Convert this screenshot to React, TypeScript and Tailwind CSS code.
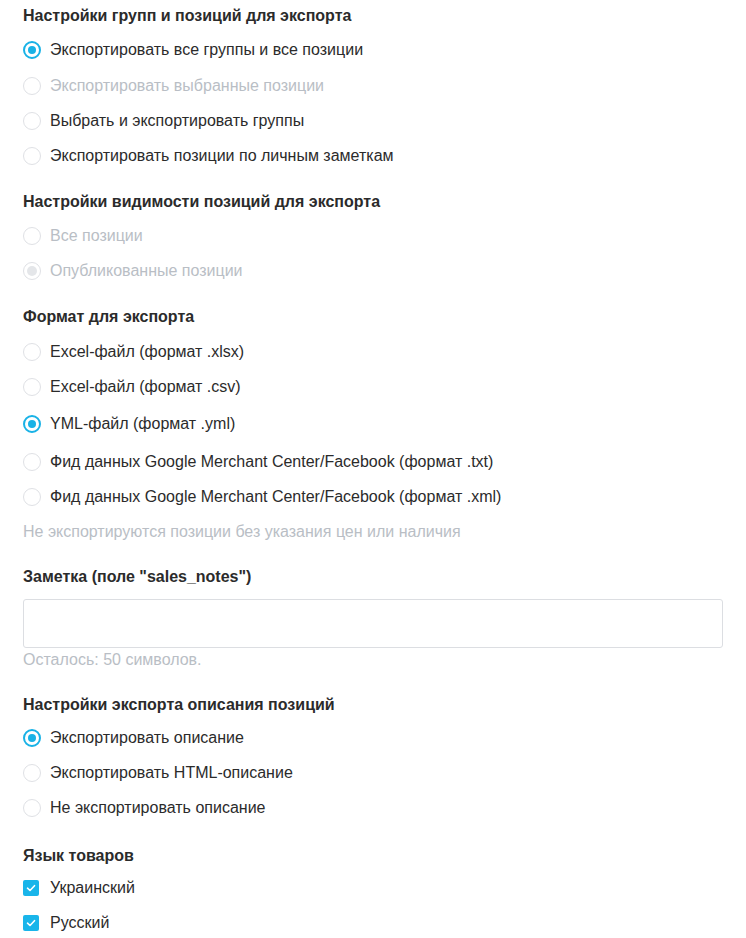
const FONT = "font-['Liberation_Sans',Arial,sans-serif]";

interface RadioRowProps {
  label: string;
  checked?: boolean;
  disabled?: boolean;
  className?: string;
}

function RadioRow({ label, checked = false, disabled = false, className = '' }: RadioRowProps) {
  return (
    <div className={`flex items-center h-[35px] ${className}`}>
      <span
        className={`size-[18px] shrink-0 rounded-full border flex items-center justify-center ${
          checked && !disabled
            ? 'border-2 border-[#19b2e6]'
            : 'border-[#dfe1e5] bg-white'
        }`}
      >
        {checked && !disabled && <span className="size-[8px] rounded-full bg-[#19b2e6]" />}
        {checked && disabled && <span className="size-[10px] rounded-full bg-[#e4e6e9]" />}
      </span>
      <span className={`ml-[9px] text-[16px] ${disabled ? 'text-[#b9bec5]' : 'text-[#2b2b2b]'}`}>
        {label}
      </span>
    </div>
  );
}

function CheckRow({ label, className = '' }: { label: string; className?: string }) {
  return (
    <div className={`flex items-center h-[35px] ${className}`}>
      <span className="size-4 shrink-0 rounded-[2px] bg-[#19b5ea] flex items-center justify-center">
        <svg viewBox="0 0 16 16" className="size-4" fill="none">
          <path d="M4.5 8.2 7 10.5l4.5-4.8" stroke="white" strokeWidth="1.6" strokeLinecap="round" strokeLinejoin="round" />
        </svg>
      </span>
      <span className="ml-[11px] text-[16px] text-[#2b2b2b]">{label}</span>
    </div>
  );
}

function Heading({ children, className = '' }: { children: React.ReactNode; className?: string }) {
  return <div className={`h-5 leading-5 text-[16px] font-bold text-[#2b2b2b] ${className}`}>{children}</div>;
}

export default function App() {
  return (
    <div className={`${FONT} bg-white w-[746px] min-h-[938px] pl-[23px] pr-[23px] pt-[6px]`}>
      <Heading>Настройки групп и позиций для экспорта</Heading>
      <div className="mt-[6.5px]">
        <RadioRow label="Экспортировать все группы и все позиции" checked />
        <RadioRow label="Экспортировать выбранные позиции" disabled className="mt-[1px]" />
        <RadioRow label="Выбрать и экспортировать группы" />
        <RadioRow label="Экспортировать позиции по личным заметкам" />
      </div>

      <Heading className="mt-[18.5px]">Настройки видимости позиций для экспорта</Heading>
      <div className="mt-[6px]">
        <RadioRow label="Все позиции" disabled />
        <RadioRow label="Опубликованные позиции" checked disabled />
      </div>

      <Heading className="mt-[19px]">Формат для экспорта</Heading>
      <div className="mt-[7.5px]">
        <RadioRow label="Excel-файл (формат .xlsx)" />
        <RadioRow label="Excel-файл (формат .csv)" />
        <RadioRow label="YML-файл (формат .yml)" checked className="mt-[2px]" />
        <RadioRow label="Фид данных Google Merchant Center/Facebook (формат .txt)" className="mt-[3px]" />
        <RadioRow label="Фид данных Google Merchant Center/Facebook (формат .xml)" />
      </div>
      <div className="h-[35px] flex items-center text-[16px] text-[#b9bec5]">
        Не экспортируются позиции без указания цен или наличия
      </div>

      <Heading className="mt-[17.5px]">Заметка (поле "sales_notes")</Heading>
      <input
        type="text"
        className="mt-[12px] block w-full h-[49px] border border-[#dcdee2] rounded-[3px] px-3 outline-none"
      />
      <div className="mt-[2px] h-5 leading-5 text-[16px] text-[#b9bec5]">
        Осталось: 50 символов.
      </div>

      <Heading className="mt-[25px]">Настройки экспорта описания позиций</Heading>
      <div className="mt-[5.5px]">
        <RadioRow label="Экспортировать описание" checked />
        <RadioRow label="Экспортировать HTML-описание" />
        <RadioRow label="Не экспортировать описание" />
      </div>

      <Heading className="mt-[20.5px]">Язык товаров</Heading>
      <div className="mt-[4.5px]">
        <CheckRow label="Украинский" />
        <CheckRow label="Русский" />
      </div>
    </div>
  );
}
